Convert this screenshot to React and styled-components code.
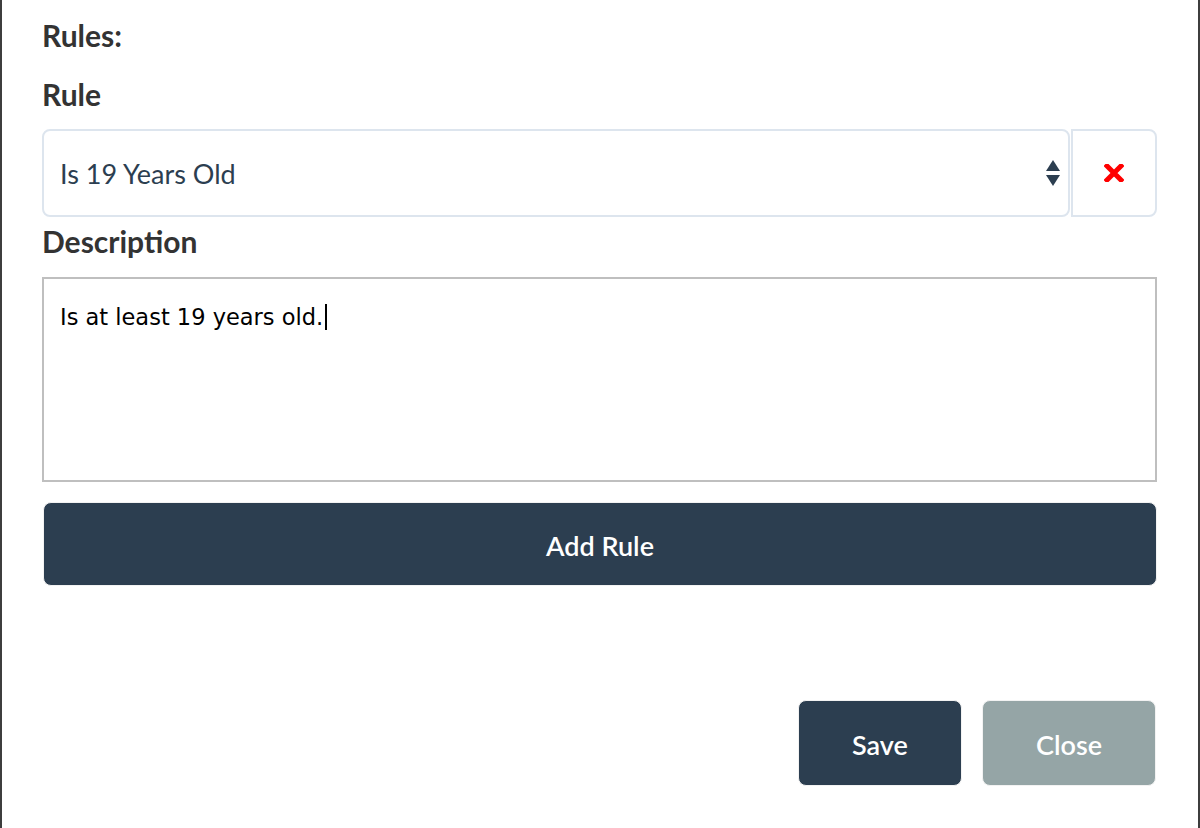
import React from 'react'
import styled, { createGlobalStyle } from 'styled-components'

const GlobalStyle = createGlobalStyle`
  html, body {
    margin: 0;
    padding: 0;
    background: #3d3d3d;
  }
  * { box-sizing: border-box; }
`

const App = () => {
  return (
    <>
      <GlobalStyle />
      <Backdrop>
        <Modal>
          <Body>
            <Heading>Rules:</Heading>
            <Label $top={23} $bottom={17}>Rule</Label>
            <SelectRow>
              <Select>
                <span>Is 19 Years Old</span>
                <Arrows>
                  <svg width="14" height="26" viewBox="0 0 14 26">
                    <path d="M7 0 L14 11 L0 11 Z" fill="#2c3e50" />
                    <path d="M0 15 L14 15 L7 26 Z" fill="#2c3e50" />
                  </svg>
                </Arrows>
              </Select>
              <RemoveButton>
                <svg width="20" height="18" viewBox="0 0 20 18">
                  <path d="M3 2 L17 16 M17 2 L3 16" stroke="#ff0000" strokeWidth="5" strokeLinecap="square" />
                </svg>
              </RemoveButton>
            </SelectRow>
            <Label $top={6} $bottom={18}>Description</Label>
            <TextBox role="textbox">
              Is at least 19 years old.<Caret />
            </TextBox>
            <Button $wide>Add Rule</Button>
          </Body>
          <Footer>
            <Button $w={164}>Save</Button>
            <Button $w={174} $muted>Close</Button>
          </Footer>
        </Modal>
      </Backdrop>
    </>
  )
}

export default App

const Backdrop = styled.div`
  width: 1200px;
  height: 828px;
  padding: 0 2px;
  background: #3d3d3d;
`

const Modal = styled.div`
  height: 828px;
  background: #fff;
  border-radius: 0 0 8px 8px;
  display: flex;
  flex-direction: column;
  font-family: Lato, "Open Sans", sans-serif;
`

const Body = styled.div`
  padding: 17px 41px 0 40px;
  display: flex;
  flex-direction: column;
`

const Heading = styled.div`
  font-size: 30px;
  line-height: 1.2;
  font-weight: 700;
  color: #333;
`

const Label = styled.div`
  font-size: 30px;
  line-height: 1.2;
  font-weight: 700;
  color: #333;
  margin-top: ${p => p.$top}px;
  margin-bottom: ${p => p.$bottom}px;
`

const SelectRow = styled.div`
  display: flex;
  gap: 1px;
  height: 88px;
`

const Select = styled.div`
  flex: 1;
  display: flex;
  align-items: center;
  justify-content: space-between;
  padding: 0 8px 0 16px;
  border: 2px solid #dde5ee;
  border-radius: 8px;
  font-size: 27px;
  color: #2c3e50;
`

const Arrows = styled.div`
  display: flex;
  align-items: center;
`

const RemoveButton = styled.div`
  width: 86px;
  display: flex;
  align-items: center;
  justify-content: center;
  border: 2px solid #dde5ee;
  border-radius: 0 8px 8px 0;
`

const TextBox = styled.div`
  height: 205px;
  border: 2px solid #bfbfbf;
  padding: 24px 16px;
  font-family: "DejaVu Sans", Verdana, sans-serif;
  font-size: 22.5px;
  line-height: 1.3;
  color: #000;
`

const Caret = styled.span`
  display: inline-block;
  width: 1.5px;
  height: 26px;
  background: #000;
  margin-left: 2px;
  vertical-align: -5px;
`

const Button = styled.div`
  display: flex;
  align-items: center;
  justify-content: center;
  height: ${p => (p.$wide ? 84 : 86)}px;
  width: ${p => (p.$wide ? 'auto' : `${p.$w}px`)};
  margin-top: ${p => (p.$wide ? 20 : 0)}px;
  margin-left: ${p => (p.$wide ? 1 : 0)}px;
  padding-top: 2px;
  background: ${p => (p.$muted ? '#95a5a6' : '#2c3e50')};
  border: 1px solid #f2f2f2;
  border-radius: 8px;
  color: #fff;
  font-size: 27px;
  font-weight: 600;
`

const Footer = styled.div`
  margin-top: auto;
  display: flex;
  justify-content: flex-end;
  gap: 20px;
  padding: 0 42px 42px 0;
  background: #fff;
`
